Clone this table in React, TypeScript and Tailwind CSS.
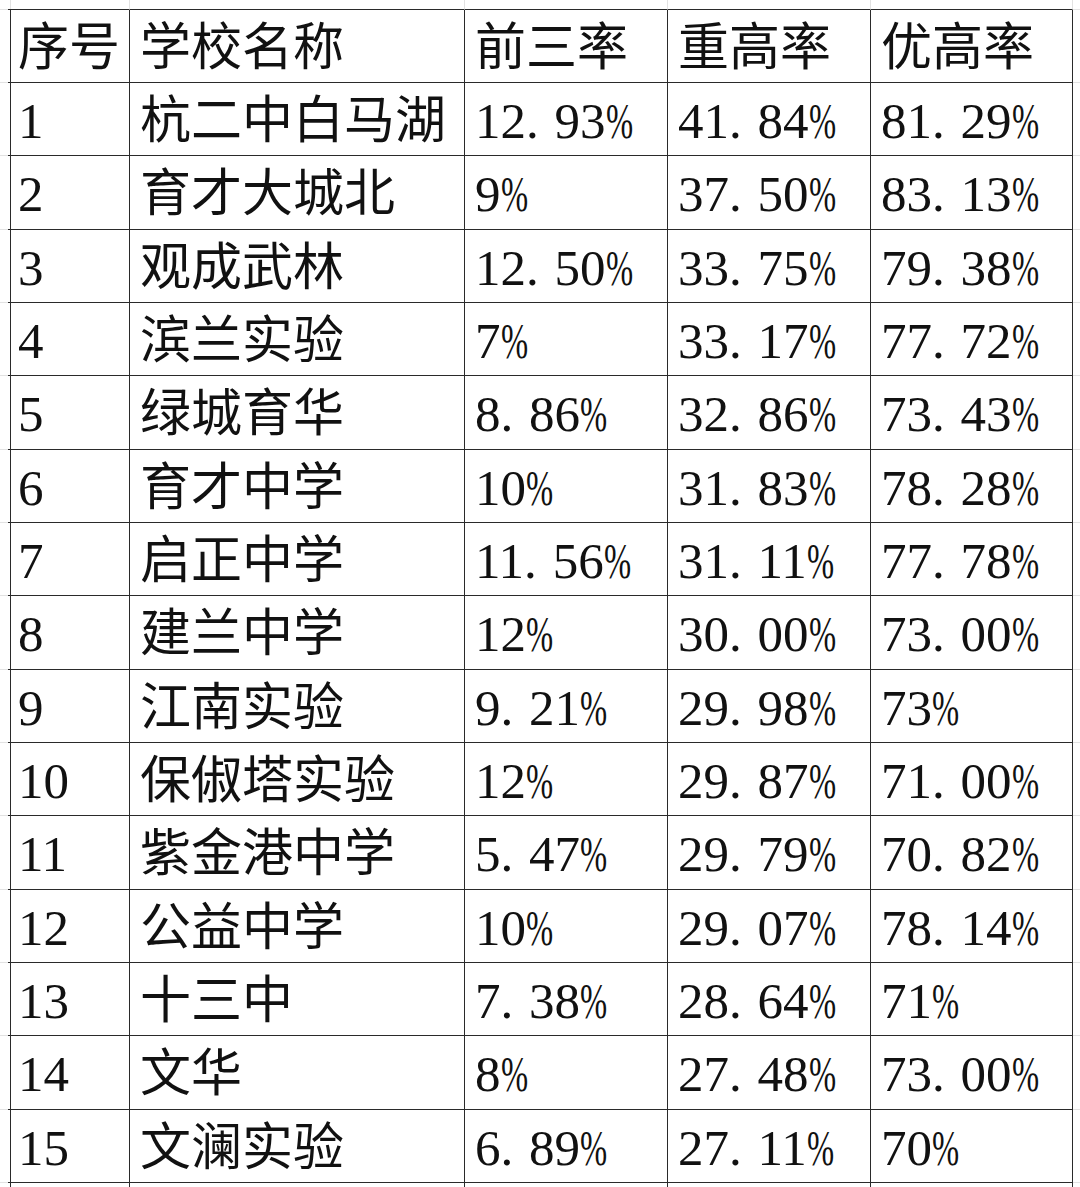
import React from "react";

const rows: [string, string, string, string, string][] = [
  ["1", "杭二中白马湖", "12.93%", "41.84%", "81.29%"],
  ["2", "育才大城北", "9%", "37.50%", "83.13%"],
  ["3", "观成武林", "12.50%", "33.75%", "79.38%"],
  ["4", "滨兰实验", "7%", "33.17%", "77.72%"],
  ["5", "绿城育华", "8.86%", "32.86%", "73.43%"],
  ["6", "育才中学", "10%", "31.83%", "78.28%"],
  ["7", "启正中学", "11.56%", "31.11%", "77.78%"],
  ["8", "建兰中学", "12%", "30.00%", "73.00%"],
  ["9", "江南实验", "9.21%", "29.98%", "73%"],
  ["10", "保俶塔实验", "12%", "29.87%", "71.00%"],
  ["11", "紫金港中学", "5.47%", "29.79%", "70.82%"],
  ["12", "公益中学", "10%", "29.07%", "78.14%"],
  ["13", "十三中", "7.38%", "28.64%", "71%"],
  ["14", "文华", "8%", "27.48%", "73.00%"],
  ["15", "文澜实验", "6.89%", "27.11%", "70%"],
];

const header = ["序号", "学校名称", "前三率", "重高率", "优高率"];

function Num({ v }: { v: string }) {
  const chars = v.split("");
  return (
    <span className="whitespace-nowrap">
      {chars.map((c, i) => {
        if (c === ".")
          return (
            <span key={i} className="inline-block w-[0.56em]">
              .
            </span>
          );
        if (c === "%")
          return (
            <span key={i} className="inline-block origin-left scale-x-[0.64]">
              %
            </span>
          );
        return <span key={i}>{c}</span>;
      })}
    </span>
  );
}

const font = "[font-family:'Liberation_Serif','Noto_Sans_CJK_SC',serif]";

export default function App() {
  const dark = "border-[#2a2a2a]";
  const light = "border-[#e2e2e2]";
  const all = [
    { kind: "top" as const },
    { kind: "head" as const },
    ...rows.map((r) => ({ kind: "row" as const, r })),
    { kind: "extra" as const },
  ];
  return (
    <div className={`h-[1187px] w-[1080px] overflow-hidden bg-white text-[#111] ${font}`}>
      <div className="grid grid-cols-[8px_122px_335px_203px_203px_202px_1fr] grid-rows-[10px_73px_repeat(15,73.33px)_80px]">
        {all.map((row, ri) => {
          const cells: React.ReactNode[] = [];
          for (let ci = 0; ci < 7; ci++) {
            const isMarginCol = ci === 0 || ci === 6;
            const isMarginRow = row.kind === "top" || row.kind === "extra";
            let rightDark = false;
            let bottomDark = false;
            if (!isMarginCol) {
              rightDark = row.kind !== "top";
              bottomDark = row.kind !== "extra";
            } else if (ci === 0) {
              rightDark = !isMarginRow || row.kind === "extra";
              bottomDark = false;
            }
            const rb = rightDark ? "border-r-[#2a2a2a]" : "border-r-[#e2e2e2]";
            const bb = bottomDark ? "border-b-[#2a2a2a]" : "border-b-[#e2e2e2]";
            let content: React.ReactNode = null;
            if (!isMarginCol && row.kind === "head") {
              content = header[ci - 1];
            } else if (!isMarginCol && row.kind === "row") {
              const v = row.r[ci - 1];
              content = ci === 2 ? v : <Num v={v} />;
            }
            cells.push(
              <div
                key={ci}
                className={`flex items-center overflow-visible border-r border-b ${ci === 6 ? "border-r-0" : ""} ${rb} ${bb} pl-[10px] pt-[5px] text-[51px] leading-none whitespace-nowrap`}
              >
                {content}
              </div>
            );
          }
          return <React.Fragment key={ri}>{cells}</React.Fragment>;
        })}
      </div>
    </div>
  );
}
